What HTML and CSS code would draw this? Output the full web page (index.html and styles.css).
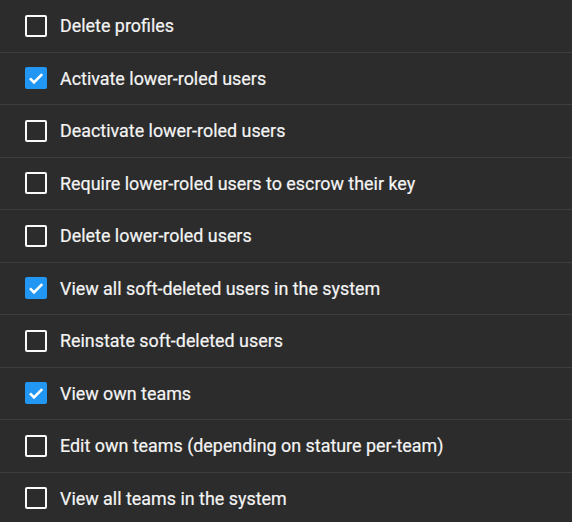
FILE: index.html
```html
<!DOCTYPE html>
<html lang="en">
<head>
  <meta charset="UTF-8">
  <meta name="viewport" content="width=device-width, initial-scale=1.0">
  <title>Permissions</title>
  <link rel="stylesheet" href="styles.css">
</head>
<body>

  <ul class="perms">
    <li class="perm"><span class="box"></span>Delete profiles</li>
    <li class="perm"><span class="box checked"><svg viewBox="0 0 22 22"><path d="M5 11.4l4 4 8.2-8.2"/></svg></span>Activate lower-roled users</li>
    <li class="perm"><span class="box"></span>Deactivate lower-roled users</li>
    <li class="perm"><span class="box"></span>Require lower-roled users to escrow their key</li>
    <li class="perm"><span class="box"></span>Delete lower-roled users</li>
    <li class="perm"><span class="box checked"><svg viewBox="0 0 22 22"><path d="M5 11.4l4 4 8.2-8.2"/></svg></span>View all soft-deleted users in the system</li>
    <li class="perm"><span class="box"></span>Reinstate soft-deleted users</li>
    <li class="perm"><span class="box checked"><svg viewBox="0 0 22 22"><path d="M5 11.4l4 4 8.2-8.2"/></svg></span>View own teams</li>
    <li class="perm"><span class="box"></span>Edit own teams (depending on stature per-team)</li>
    <li class="perm"><span class="box"></span>View all teams in the system</li>
  </ul>

</body>
</html>
```

FILE: styles.css
```css
html, body {
  margin: 0;
  height: 100%;
  background-color: #2c2c2c;
  overflow: hidden;
}
.perms {
  list-style: none;
  margin: -1px 0 0 0;
  padding: 0;
  font-family: Roboto, "Noto Sans", sans-serif;
  font-size: 17.9px;
  color: #f4f4f4;
  -webkit-text-stroke: 0.2px #f4f4f4;
}
.perm {
  display: flex;
  align-items: center;
  gap: 13px;
  box-sizing: border-box;
  height: 52.5px;
  padding-left: 25px;
  border-top: 1px solid #3d3d3d;
}
.box {
  box-sizing: border-box;
  width: 22px;
  height: 22px;
  border: 2px solid #fafafa;
  border-radius: 2px;
  flex-shrink: 0;
}
.box.checked {
  background-color: #2196f3;
  border-color: #2196f3;
  border-width: 0;
}
.box svg {
  display: block;
  width: 22px;
  height: 22px;
}
.box svg path {
  fill: none;
  stroke: #fff;
  stroke-width: 2.6;
}
```
